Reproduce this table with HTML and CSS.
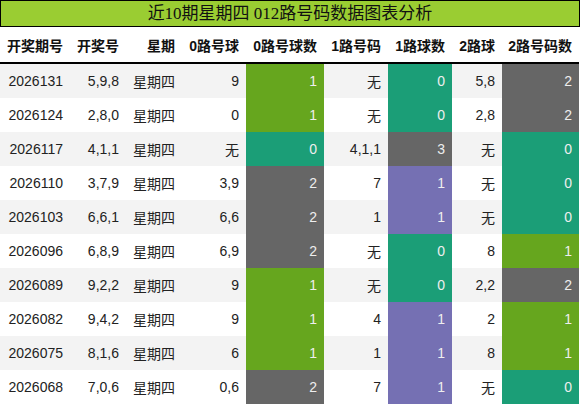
FILE: index.html
```html
<!DOCTYPE html>
<html lang="zh-CN">
<head>
  <meta charset="UTF-8">
  <meta name="viewport" content="width=device-width, initial-scale=1.0">
  <title>012路号码数据图表分析</title>
  <link rel="stylesheet" href="styles.css">
</head>
<body>
  <div class="title">近10期星期四 012路号码数据图表分析</div>
  <table class="chart">
    <colgroup>
      <col class="w70"><col class="w56"><col class="w56"><col class="w64"><col class="w78">
      <col class="w64"><col class="w64"><col class="w50"><col class="w77">
    </colgroup>
    <thead>
      <tr>
        <th>开奖期号</th><th>开奖号</th><th>星期</th><th>0路号球</th><th>0路号球数</th>
        <th>1路号码</th><th>1路球数</th><th>2路球</th><th>2路号码数</th>
      </tr>
    </thead>
    <tbody>
      <tr><td>2026131</td><td>5,9,8</td><td>星期四</td><td>9</td><td class="green">1</td><td>无</td><td class="teal">0</td><td>5,8</td><td class="grey">2</td></tr>
      <tr><td>2026124</td><td>2,8,0</td><td>星期四</td><td>0</td><td class="green">1</td><td>无</td><td class="teal">0</td><td>2,8</td><td class="grey">2</td></tr>
      <tr><td>2026117</td><td>4,1,1</td><td>星期四</td><td>无</td><td class="teal">0</td><td>4,1,1</td><td class="grey">3</td><td>无</td><td class="teal">0</td></tr>
      <tr><td>2026110</td><td>3,7,9</td><td>星期四</td><td>3,9</td><td class="grey">2</td><td>7</td><td class="purple">1</td><td>无</td><td class="teal">0</td></tr>
      <tr><td>2026103</td><td>6,6,1</td><td>星期四</td><td>6,6</td><td class="grey">2</td><td>1</td><td class="purple">1</td><td>无</td><td class="teal">0</td></tr>
      <tr><td>2026096</td><td>6,8,9</td><td>星期四</td><td>6,9</td><td class="grey">2</td><td>无</td><td class="teal">0</td><td>8</td><td class="green">1</td></tr>
      <tr><td>2026089</td><td>9,2,2</td><td>星期四</td><td>9</td><td class="green">1</td><td>无</td><td class="teal">0</td><td>2,2</td><td class="grey">2</td></tr>
      <tr><td>2026082</td><td>9,4,2</td><td>星期四</td><td>9</td><td class="green">1</td><td>4</td><td class="purple">1</td><td>2</td><td class="green">1</td></tr>
      <tr><td>2026075</td><td>8,1,6</td><td>星期四</td><td>6</td><td class="green">1</td><td>1</td><td class="purple">1</td><td>8</td><td class="green">1</td></tr>
      <tr><td>2026068</td><td>7,0,6</td><td>星期四</td><td>0,6</td><td class="grey">2</td><td>7</td><td class="purple">1</td><td>无</td><td class="teal">0</td></tr>
    </tbody>
  </table>
</body>
</html>
```
FILE: styles.css
```css
body {
  margin: 0;
  background: #fff;
}

.title {
  width: 578px;
  height: 25px;
  line-height: 25px;
  border: 1px solid #000;
  background: #9acd32;
  color: #111;
  text-align: center;
  font-family: "Liberation Serif", "Noto Sans CJK SC", serif;
  font-size: 17px;
}

.chart {
  width: 579px;
  border-collapse: collapse;
  table-layout: fixed;
  font-family: "Liberation Sans", "Noto Sans CJK SC", sans-serif;
  font-size: 14px;
  color: #222;
}

.w70 { width: 70px; }
.w56 { width: 56px; }
.w64 { width: 64px; }
.w78 { width: 78px; }
.w50 { width: 50px; }
.w77 { width: 77px; }

.chart th,
.chart td {
  padding: 0 7px 0 0;
  text-align: right;
  white-space: nowrap;
}

.chart th {
  height: 35px;
  font-weight: bold;
  color: #111;
  border-bottom: 2px solid #000;
}

.chart td {
  height: 34px;
}

.chart tbody tr:nth-child(odd) {
  background: #f3f3f3;
}

.chart td.green,
.chart td.teal,
.chart td.grey,
.chart td.purple {
  color: #eee;
}

.chart td.green { background: #66a61e; }
.chart td.teal { background: #1b9e77; }
.chart td.grey { background: #666666; }
.chart td.purple { background: #7570b3; }
```
